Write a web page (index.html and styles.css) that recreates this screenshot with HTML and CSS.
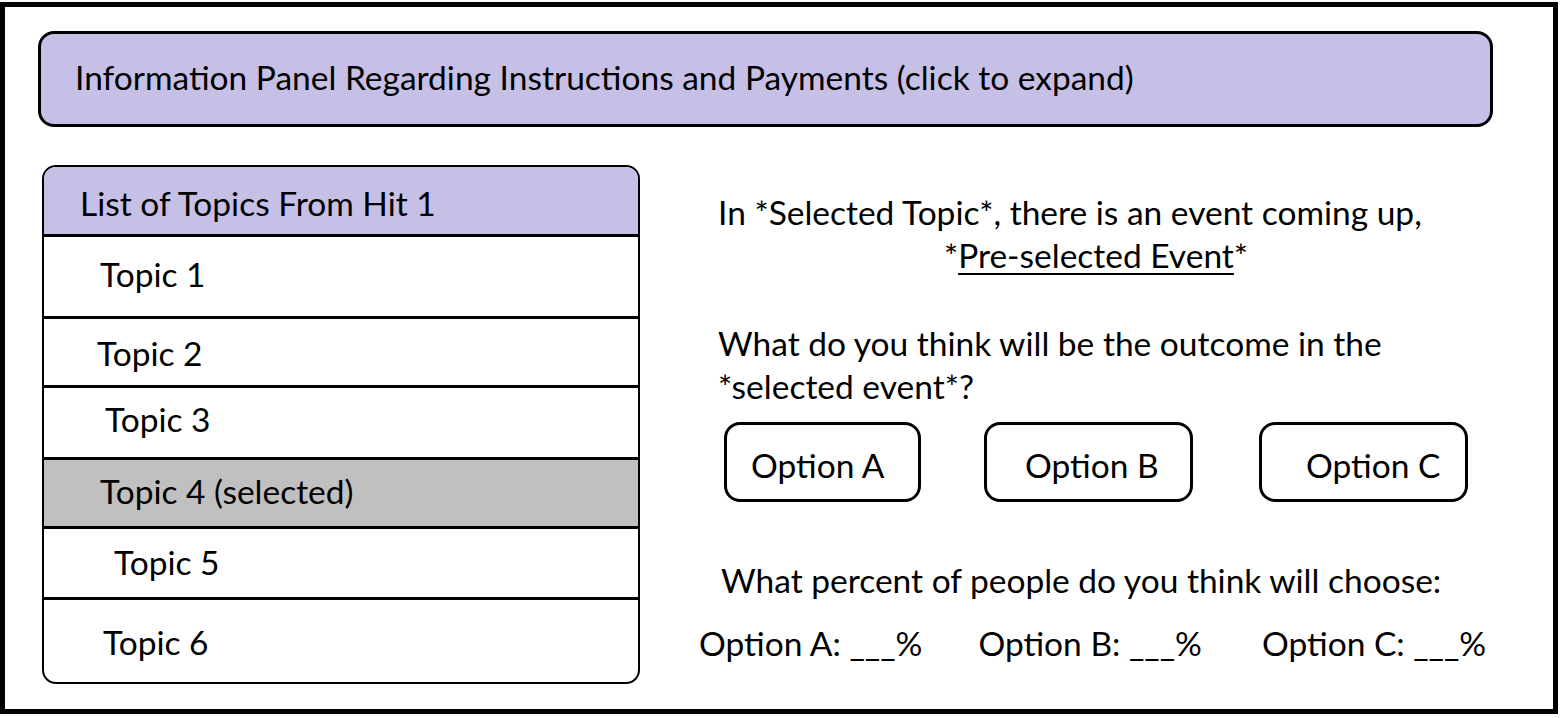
FILE: index.html
```html
<!DOCTYPE html>
<html>
<head>
<meta charset="utf-8">
<link rel="stylesheet" href="styles.css">
</head>
<body>
<div class="frame">
  <div class="info-panel">Information Panel Regarding Instructions and Payments (click to expand)</div>
  <div class="content">
    <div class="topic-list">
      <div class="list-header">List of Topics From Hit 1</div>
      <div class="topic t1">Topic 1</div>
      <div class="topic t2">Topic 2</div>
      <div class="topic t3">Topic 3</div>
      <div class="topic t4 selected">Topic 4 (selected)</div>
      <div class="topic t5">Topic 5</div>
      <div class="topic t6">Topic 6</div>
    </div>
    <div class="question">
      <p class="line l1">In *Selected Topic*, there is an event coming up,</p>
      <p class="line l2 center">*<span class="u">Pre-selected Event</span>*</p>
      <p class="line l3">What do you think will be the outcome in the</p>
      <p class="line l4">*selected event*?</p>
      <div class="options">
        <div class="option oa">Option A</div>
        <div class="option ob">Option B</div>
        <div class="option oc">Option C</div>
      </div>
      <p class="line l5">What percent of people do you think will choose:</p>
      <div class="percents">
        <span class="pct pa">Option A: ___%</span>
        <span class="pct pb">Option B: ___%</span>
        <span class="pct pc">Option C: ___%</span>
      </div>
    </div>
  </div>
</div>
</body>
</html>
```

FILE: styles.css
```css
* { box-sizing: border-box; }
html, body { margin: 0; padding: 0; background: #fff; }
body {
  font-family: Lato, "Open Sans", sans-serif;
  color: #000;
  font-size: 33.5px;
}
.frame {
  margin-top: 2px;
  width: 1558px;
  height: 712px;
  border: 5px solid #000;
  padding: 24px 0 0 33px;
}
.info-panel {
  width: 1455px;
  height: 96px;
  background: #c7c0e6;
  border: 3px solid #000;
  border-radius: 16px;
  padding-left: 34px;
  display: flex;
  align-items: center;
  padding-bottom: 4px;
}
.content {
  display: flex;
  margin-top: 38px;
  padding-left: 4px;
}
.topic-list {
  width: 598px;
  height: 519px;
  border: 2.5px solid #000;
  border-radius: 14px;
  overflow: hidden;
  display: flex;
  flex-direction: column;
}
.list-header {
  background: #c7c0e6;
  height: 70px;
  border-bottom: 3px solid #000;
  padding-left: 36px;
  padding-top: 4px;
  display: flex;
  align-items: center;
}
.topic {
  display: flex;
  align-items: center;
  border-bottom: 3px solid #000;
}
.topic:last-child { border-bottom: none; flex: 1; }
.t1 { height: 82px; padding-left: 56px; padding-bottom: 6px; }
.t2 { height: 69px; padding-left: 53px; padding-top: 2px; }
.t3 { height: 72px; padding-left: 61px; padding-bottom: 8px; }
.t4 { height: 69px; padding-left: 56px; padding-bottom: 4px; }
.t5 { height: 71px; padding-left: 70px; padding-bottom: 2px; }
.t6 { padding-left: 59px; padding-top: 2px; }
.selected { background: #c0c0c0; }
.question {
  padding-left: 78px;
  padding-top: 26px;
  width: 850px;
}
.line { margin: 0; line-height: 43px; white-space: nowrap; }
.center { text-align: center; width: 756px; }
.u { text-decoration: underline; text-decoration-thickness: 2px; text-underline-offset: 5px; }
.l3 { margin-top: 45px; }
.options {
  display: flex;
  margin-top: 14px;
}
.option {
  height: 80px;
  border: 3px solid #000;
  border-radius: 16px;
  display: flex;
  align-items: center;
  padding-top: 6px;
}
.oa { width: 197px; margin-left: 6px; padding-left: 24px; }
.ob { width: 209px; margin-left: 63px; padding-left: 38px; }
.oc { width: 209px; margin-left: 66px; padding-left: 44px; }
.l5 { margin-top: 57px; padding-left: 3px; }
.percents {
  display: flex;
  margin-top: 20px;
  margin-left: -19px;
  line-height: 43px;
}
.pct { white-space: nowrap; }
.pb { margin-left: 56px; }
.pc { margin-left: 60px; }
```
